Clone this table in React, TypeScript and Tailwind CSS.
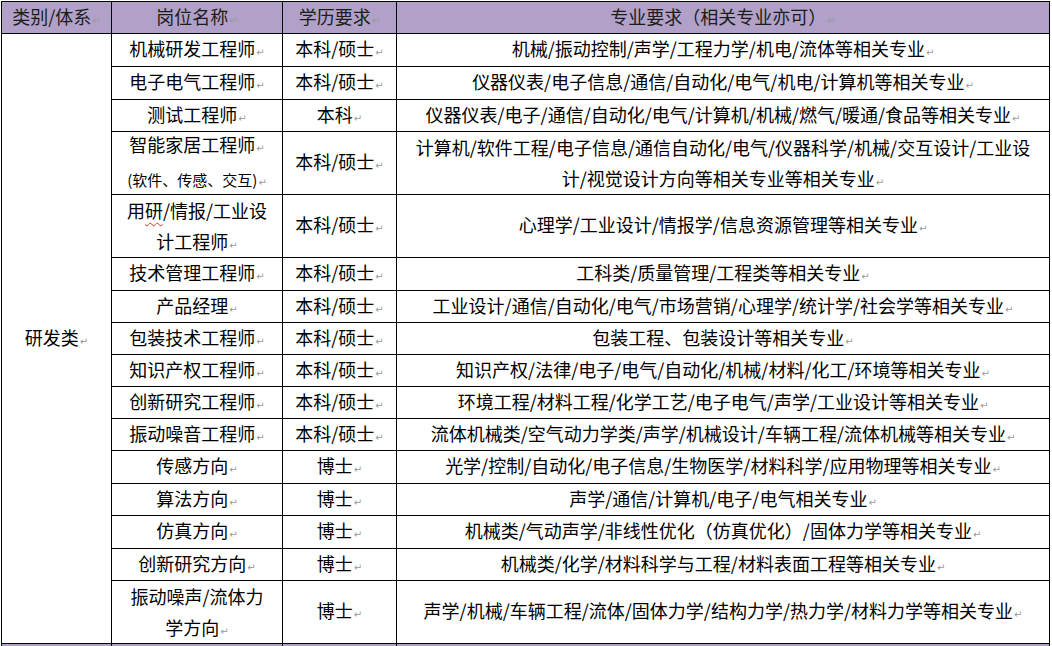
import type { ReactNode } from "react";

type Row = {
  name: ReactNode;
  edu: string;
  major: ReactNode;
  ownMark?: boolean;
};

const Mark = () => (
  <span className="ml-px align-[0px] font-['DejaVu_Sans'] text-[10px] text-[#9a9a9a]">↵</span>
);

const rows: Row[] = [
  { name: "机械研发工程师", edu: "本科/硕士", major: "机械/振动控制/声学/工程力学/机电/流体等相关专业" },
  { name: "电子电气工程师", edu: "本科/硕士", major: "仪器仪表/电子信息/通信/自动化/电气/机电/计算机等相关专业" },
  { name: "测试工程师", edu: "本科", major: "仪器仪表/电子/通信/自动化/电气/计算机/机械/燃气/暖通/食品等相关专业" },
  {
    name: (
      <>
        <div className="leading-[31px]">
          智能家居工程师<Mark />
        </div>
        <div className="text-[15px] leading-[31px]">
          (软件、传感、交互)<Mark />
        </div>
      </>
    ),
    ownMark: true,
    edu: "本科/硕士",
    major: (
      <span className="leading-[31px]">
        计算机/软件工程/电子信息/通信自动化/电气/仪器科学/机械/交互设计/工业设
        <br />
        计/视觉设计方向等相关专业等相关专业
      </span>
    ),
  },
  {
    name: (
      <span className="leading-[31px]">
        用<span className="underline decoration-wavy decoration-[#e0342a] decoration-1 underline-offset-4">研</span>/情报/工业设
        <br />
        计工程师
      </span>
    ),
    edu: "本科/硕士",
    major: "心理学/工业设计/情报学/信息资源管理等相关专业",
  },
  { name: "技术管理工程师", edu: "本科/硕士", major: "工科类/质量管理/工程类等相关专业" },
  { name: "产品经理", edu: "本科/硕士", major: "工业设计/通信/自动化/电气/市场营销/心理学/统计学/社会学等相关专业" },
  { name: "包装技术工程师", edu: "本科/硕士", major: "包装工程、包装设计等相关专业" },
  { name: "知识产权工程师", edu: "本科/硕士", major: "知识产权/法律/电子/电气/自动化/机械/材料/化工/环境等相关专业" },
  { name: "创新研究工程师", edu: "本科/硕士", major: "环境工程/材料工程/化学工艺/电子电气/声学/工业设计等相关专业" },
  { name: "振动噪音工程师", edu: "本科/硕士", major: "流体机械类/空气动力学类/声学/机械设计/车辆工程/流体机械等相关专业" },
  { name: "传感方向", edu: "博士", major: "光学/控制/自动化/电子信息/生物医学/材料科学/应用物理等相关专业" },
  { name: "算法方向", edu: "博士", major: "声学/通信/计算机/电子/电气相关专业" },
  { name: "仿真方向", edu: "博士", major: "机械类/气动声学/非线性优化（仿真优化）/固体力学等相关专业" },
  { name: "创新研究方向", edu: "博士", major: "机械类/化学/材料科学与工程/材料表面工程等相关专业" },
  {
    name: (
      <span className="leading-[31px]">
        振动噪声/流体力
        <br />
        学方向
      </span>
    ),
    edu: "博士",
    major: "声学/机械/车辆工程/流体/固体力学/结构力学/热力学/材料力学等相关专业",
  },
];

function Cell({
  children,
  className = "",
  mark = true,
}: {
  children?: ReactNode;
  className?: string;
  mark?: boolean;
}) {
  return (
    <div className={`flex items-center justify-center border-r border-b border-black px-1 pt-px text-center ${className}`}>
      <div>
        {children}
        {mark && <Mark />}
      </div>
    </div>
  );
}

export default function App() {
  return (
    <div className="min-h-[646px] overflow-hidden bg-white pt-px pl-px font-['Noto_Sans_CJK_SC',sans-serif] text-[18px] leading-[24px] text-black">
      <div className="grid w-[1049px] grid-cols-[110px_171px_114px_653px] grid-rows-[32px_33px_33px_32px_63px_63px_33px_32px_32px_32px_32px_32px_33px_32px_33px_32px_63px_32px] border-t border-l border-black">
        {/* Header */}
        <Cell className="bg-[#b1a0c7] text-[#1c1c1c]">类别/体系</Cell>
        <Cell className="bg-[#b1a0c7] text-[#1c1c1c]">岗位名称</Cell>
        <Cell className="bg-[#b1a0c7] text-[#1c1c1c]">学历要求</Cell>
        <Cell className="bg-[#b1a0c7] text-[#1c1c1c]">专业要求（相关专业亦可）</Cell>

        {/* 研发类 */}
        <Cell className="row-span-16">研发类</Cell>
        {rows.map((row, i) => (
          <div key={i} className="contents">
            <Cell mark={!row.ownMark}>{row.name}</Cell>
            <Cell>{row.edu}</Cell>
            <Cell>{row.major}</Cell>
          </div>
        ))}

        {/* next section header, cut off */}
        <Cell mark={false} className="bg-[#b1a0c7]" />
        <Cell mark={false} className="bg-[#b1a0c7]" />
        <Cell mark={false} className="bg-[#b1a0c7]" />
        <Cell mark={false} className="bg-[#b1a0c7]" />
      </div>
    </div>
  );
}
